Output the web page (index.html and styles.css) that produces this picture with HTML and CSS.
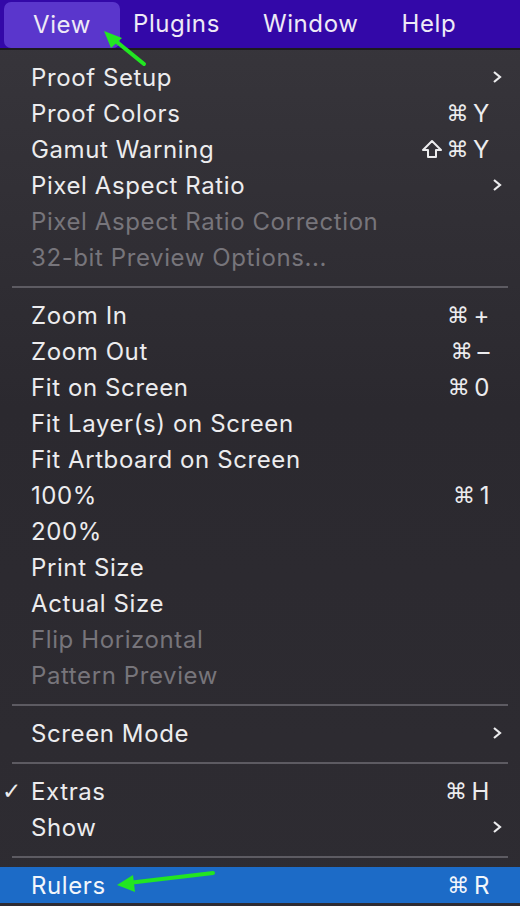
FILE: index.html
```html
<!DOCTYPE html>
<html>
<head>
	<title>View menu</title>
	<meta charset="UTF-8">
	<link rel="stylesheet" href="styles.css">
</head>
<body>
	<div id="screen">
		<ul id="menubar">
			<li class="open">View</li>
			<li>Plugins</li>
			<li>Window</li>
			<li>Help</li>
		</ul>
		<ul id="menu">
			<li class="item"><span class="label">Proof Setup</span><span class="sub"><svg width="10" height="14" viewBox="0 0 10 14"><path d="M2 2 L8 7 L2 12" /></svg></span></li>
			<li class="item"><span class="label">Proof Colors</span><span class="key"><i>⌘</i>Y</span></li>
			<li class="item"><span class="label">Gamut Warning</span><span class="key"><svg class="shift" width="22" height="20" viewBox="0 0 22 20"><path d="M11 2 L20 11 L15 11 L15 18 L7 18 L7 11 L2 11 Z" /></svg><i>⌘</i>Y</span></li>
			<li class="item"><span class="label">Pixel Aspect Ratio</span><span class="sub"><svg width="10" height="14" viewBox="0 0 10 14"><path d="M2 2 L8 7 L2 12" /></svg></span></li>
			<li class="item off"><span class="label">Pixel Aspect Ratio Correction</span></li>
			<li class="item off"><span class="label">32-bit Preview Options...</span></li>
			<li class="sep"></li>
			<li class="item"><span class="label">Zoom In</span><span class="key"><i>⌘</i>+</span></li>
			<li class="item"><span class="label">Zoom Out</span><span class="key"><i>⌘</i>–</span></li>
			<li class="item"><span class="label">Fit on Screen</span><span class="key"><i>⌘</i>0</span></li>
			<li class="item"><span class="label">Fit Layer(s) on Screen</span></li>
			<li class="item"><span class="label">Fit Artboard on Screen</span></li>
			<li class="item"><span class="label">100%</span><span class="key"><i>⌘</i>1</span></li>
			<li class="item"><span class="label">200%</span></li>
			<li class="item"><span class="label">Print Size</span></li>
			<li class="item"><span class="label">Actual Size</span></li>
			<li class="item off"><span class="label">Flip Horizontal</span></li>
			<li class="item off"><span class="label">Pattern Preview</span></li>
			<li class="sep"></li>
			<li class="item"><span class="label">Screen Mode</span><span class="sub"><svg width="10" height="14" viewBox="0 0 10 14"><path d="M2 2 L8 7 L2 12" /></svg></span></li>
			<li class="sep"></li>
			<li class="item"><span class="check">✓</span><span class="label">Extras</span><span class="key"><i>⌘</i>H</span></li>
			<li class="item"><span class="label">Show</span><span class="sub"><svg width="10" height="14" viewBox="0 0 10 14"><path d="M2 2 L8 7 L2 12" /></svg></span></li>
			<li class="sep"></li>
			<li class="item hover"><span class="label">Rulers</span><span class="key"><i>⌘</i>R</span></li>
		</ul>
		<svg class="arrow" width="520" height="906" viewBox="0 0 520 906">
			<line x1="144" y1="64" x2="112" y2="38" />
			<path class="head" d="M104 31 L122 38 L111 48 Z" />
			<line x1="213" y1="873" x2="128" y2="883" />
			<path class="head" d="M117 885 L133 875 L135 892 Z" />
		</svg>
	</div>
</body>
</html>
```
FILE: styles.css
```css
*{
	margin: 0;
	padding: 0;
}
ul{
	list-style: none;
}
body{
	background: #28262b;
	font-family: Inter, "Open Sans", "DejaVu Sans", sans-serif;
	color: #ececee;
}
#screen{
	width: 520px;
	height: 906px;
	position: relative;
	overflow: hidden;
	background: linear-gradient(#38363c, #2b292f 45%, #2e2c32 100%);
}
#menubar{
	height: 48px;
	background: #3308a8;
	border-bottom: 2px solid #1c1a20;
	display: flex;
	align-items: center;
	padding-left: 4px;
}
#menubar li{
	font-size: 24px;
	letter-spacing: 0.6px;
	color: #eeeaf6;
	height: 46px;
	line-height: 46px;
	padding: 0 21px 0 22px;
}
#menubar .open{
	background: #5a36cc;
	border-radius: 7px;
	padding: 0 29px 0 29px;
	margin-right: -9px;
	margin-top: 1px;
}
#menu{
	padding-top: 9px;
}
.item{
	height: 36px;
	display: flex;
	align-items: center;
	position: relative;
	font-size: 24px;
	letter-spacing: 0.6px;
	padding-left: 31px;
}
.item .label{
	flex: 1;
}
.off{
	color: #77757b;
}
.key{
	padding-right: 30px;
	display: flex;
	align-items: center;
}
.key i{
	font-style: normal;
	font-family: "DejaVu Sans", sans-serif;
	font-size: 22px;
	margin-right: 4px;
}
.shift{
	margin-right: 4px;
}
.shift path{
	fill: none;
	stroke: #ececee;
	stroke-width: 2;
	stroke-linejoin: round;
}
.sub{
	padding-right: 18px;
	display: flex;
}
.sub path{
	fill: none;
	stroke: #ececee;
	stroke-width: 2.2;
}
.check{
	position: absolute;
	left: 2px;
	font-family: "DejaVu Sans", sans-serif;
	font-size: 23px;
	font-weight: bold;
}
.sep{
	height: 2px;
	background: #5d5b62;
	margin: 11px 12px 9px 12px;
}
.hover{
	background: #1c6bc7;
	color: #f2f6fb;
}
.arrow{
	position: absolute;
	left: 0;
	top: 0;
	pointer-events: none;
}
.arrow line{
	stroke: #22e622;
	stroke-width: 4;
	stroke-linecap: round;
}
.arrow .head{
	fill: #22e622;
}
```
